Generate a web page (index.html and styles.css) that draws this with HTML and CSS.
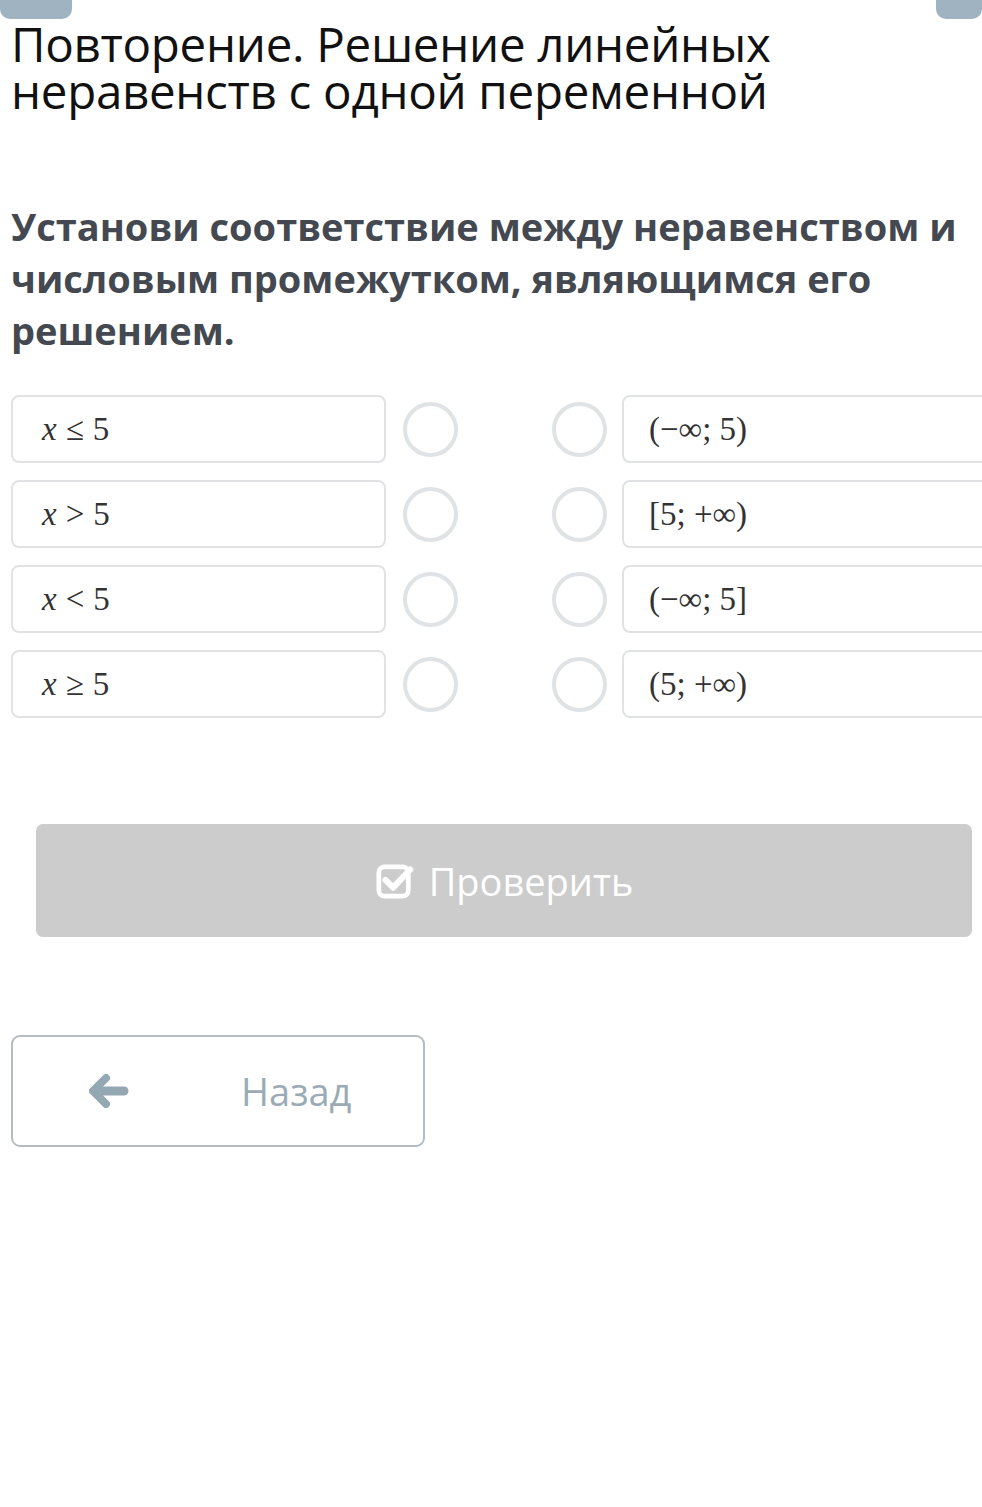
FILE: index.html
```html
<!DOCTYPE html>
<html lang="ru">
<head>
<meta charset="utf-8">
<link rel="stylesheet" href="styles.css">
</head>
<body>
<div class="page">
  <div class="tabs"><span class="tab tab-left"></span><span class="tab tab-right"></span></div>
  <h1 class="title">Повторение. Решение линейных неравенств с одной переменной</h1>
  <h2 class="question">Установи соответствие между неравенством и числовым промежутком, являющимся его решением.</h2>
  <div class="match">
    <div class="row">
      <div class="card left"><span class="math"><i>x</i><span class="rel">≤</span>5</span></div>
      <span class="dot"></span><span class="dot dot-r"></span>
      <div class="card right"><span class="math">(−∞; 5)</span></div>
    </div>
    <div class="row">
      <div class="card left"><span class="math"><i>x</i><span class="rel">&gt;</span>5</span></div>
      <span class="dot"></span><span class="dot dot-r"></span>
      <div class="card right"><span class="math">[5; +∞)</span></div>
    </div>
    <div class="row">
      <div class="card left"><span class="math"><i>x</i><span class="rel">&lt;</span>5</span></div>
      <span class="dot"></span><span class="dot dot-r"></span>
      <div class="card right"><span class="math">(−∞; 5]</span></div>
    </div>
    <div class="row">
      <div class="card left"><span class="math"><i>x</i><span class="rel">≥</span>5</span></div>
      <span class="dot"></span><span class="dot dot-r"></span>
      <div class="card right"><span class="math">(5; +∞)</span></div>
    </div>
  </div>
  <div class="check-wrap">
    <button class="check">
      <svg class="check-icon" viewBox="0 0 40 40" width="40" height="38">
        <rect x="3" y="5" width="31" height="31" rx="6" fill="none" stroke="#fff" stroke-width="5"/>
        <path d="M10 19 L18 27 L36 8" fill="none" stroke="#fff" stroke-width="6.5" stroke-linecap="round" stroke-linejoin="round"/>
      </svg>
      <span>Проверить</span>
    </button>
  </div>
  <button class="back">
    <svg class="back-icon" viewBox="0 0 40 34" width="40" height="34">
      <path d="M17 4 L4 17 L17 30" fill="none" stroke="#94a8b4" stroke-width="8" stroke-linecap="round" stroke-linejoin="round"/>
      <path d="M6 17 H35" fill="none" stroke="#94a8b4" stroke-width="9" stroke-linecap="round"/>
    </svg>
    <span class="back-text">Назад</span>
  </button>
</div>
</body>
</html>
```
FILE: styles.css
```css
* { box-sizing: border-box; }
html, body { margin: 0; padding: 0; }
body {
  background: #fff;
  width: 982px;
  height: 1507px;
  overflow: hidden;
  font-family: "Open Sans", "Noto Sans", sans-serif;
}
.page { position: relative; padding: 0 0 0 11px; }
.tabs { position: absolute; top: 0; left: 0; right: 0; height: 19px; }
.tab {
  position: absolute; top: 0; height: 19px;
  background: #9fb3c0;
  border-radius: 0 0 10px 10px;
}
.tab-left { left: 0; width: 72px; }
.tab-right { right: 0; width: 46px; }
.title {
  margin: 0;
  padding-top: 20px;
  font-weight: 400;
  font-size: 47.5px;
  line-height: 47px;
  color: #111;
  width: 820px;
  letter-spacing: -0.3px;
}
.question {
  margin: 86px 0 0 0;
  font-weight: 700;
  font-size: 38px;
  line-height: 52px;
  color: #444951;
  width: 970px;
}
.match { margin-top: 39px; display: flex; flex-direction: column; gap: 17px; }
.row { display: flex; align-items: center; height: 68px; }
.card {
  height: 68px;
  width: 375px;
  border: 2px solid #e0e2e4;
  border-radius: 8px;
  display: flex; align-items: center;
  padding-left: 29px;
  flex-shrink: 0;
}
.math {
  font-family: "Liberation Serif", "DejaVu Serif", serif;
  font-size: 33px;
  color: #333;
  white-space: nowrap;
}
.math i { font-style: italic; }
.rel { display: inline-block; margin: 0 9px; }
.dot {
  width: 55px; height: 55px;
  border: 4px solid #dfe3e6;
  border-radius: 50%;
  margin-left: 17px;
  flex-shrink: 0;
}
.dot-r { margin-left: 94px; }
.card.right { margin-left: 15px; padding-left: 25px; }
.check-wrap { margin-top: 106px; padding-left: 25px; }
.check {
  width: 936px; height: 113px;
  border: none;
  background: #cccccc;
  border-radius: 7px;
  display: flex; align-items: center; justify-content: center; gap: 14px;
  color: #fff;
  font-family: "Open Sans", "Noto Sans", sans-serif;
  font-size: 38px;
  padding: 0 0 0 0;
}
.check-icon { display: block; }
.back {
  margin-top: 98px;
  width: 414px; height: 112px;
  background: #fff;
  border: 2px solid #b4bcc1;
  border-radius: 9px;
  display: flex; align-items: center;
  padding: 0 0 0 76px;
  font-family: "Open Sans", "Noto Sans", sans-serif;
}
.back-icon { display: block; }
.back-text {
  margin-left: 112px;
  font-size: 38px;
  color: #9aabb5;
}
```
